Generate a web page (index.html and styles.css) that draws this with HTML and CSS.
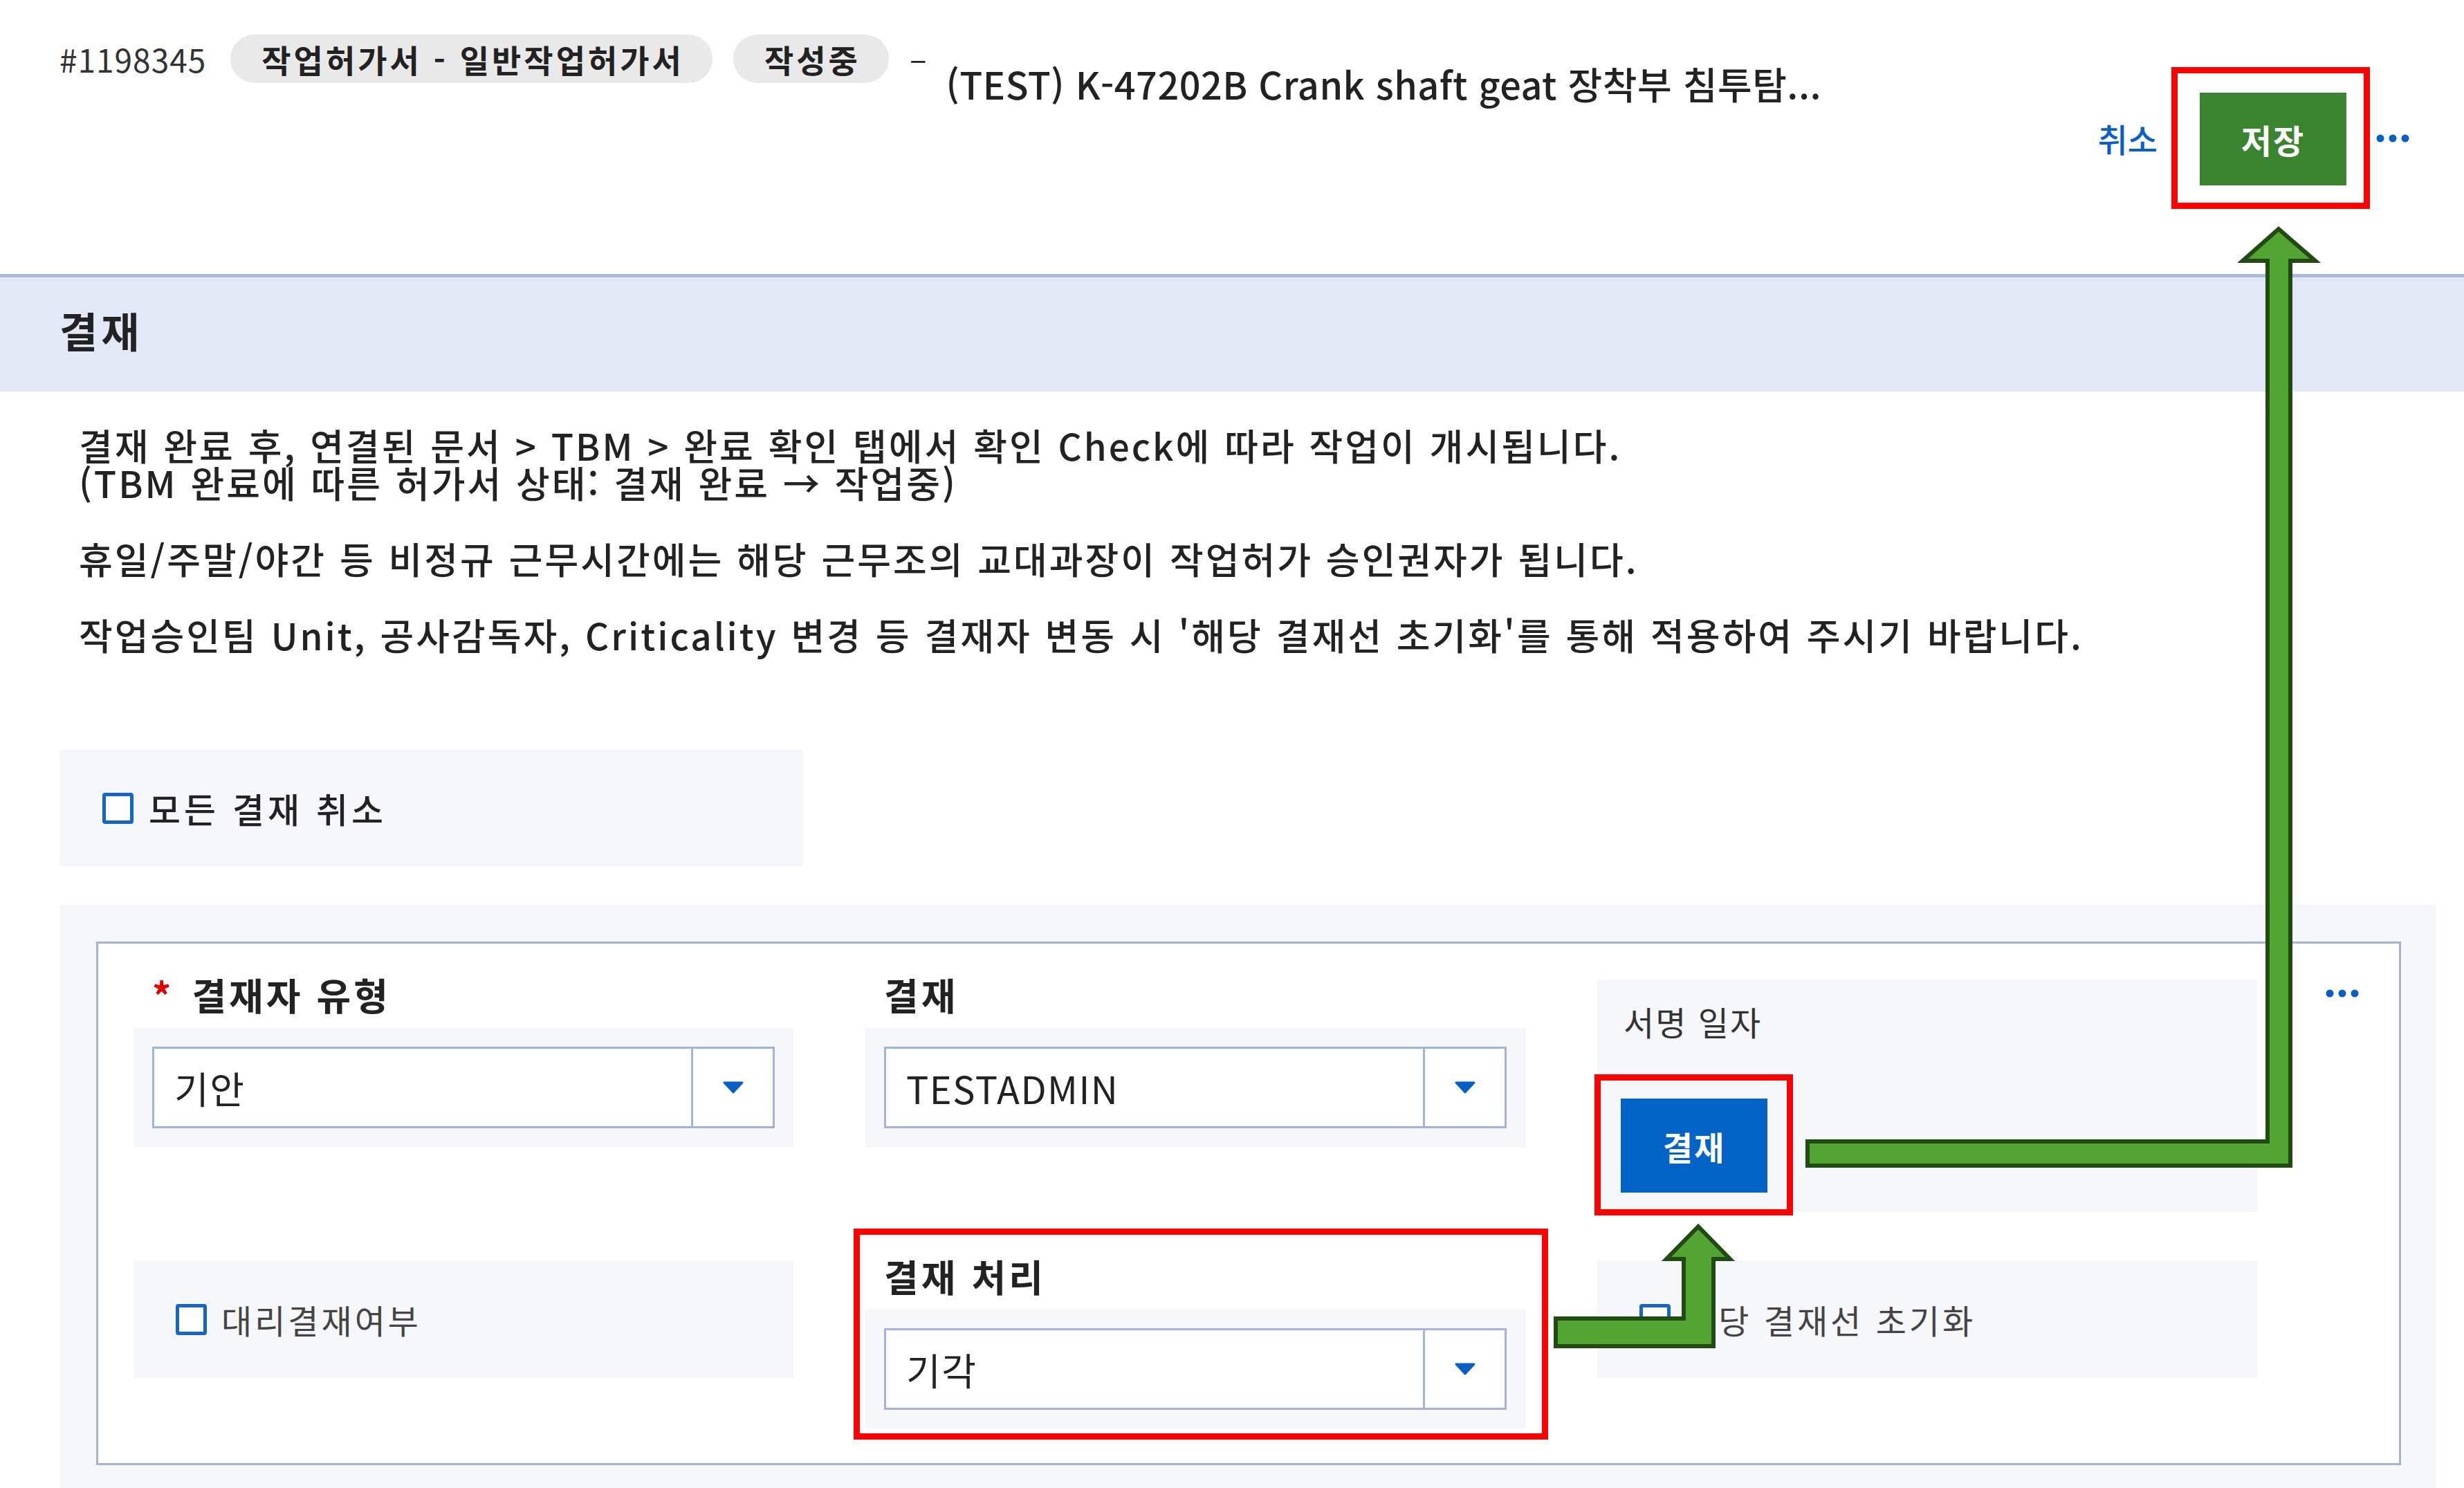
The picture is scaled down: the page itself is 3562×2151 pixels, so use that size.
FILE: index.html
```html
<!DOCTYPE html>
<html lang="ko">

<head>
    <meta charset="UTF-8">
    <meta name="viewport" content="width=device-width, initial-scale=1.0">
    <title>결재</title>
    <link rel="stylesheet" href="styles.css">
</head>

<body>
    <header class="docHeader">
        <div class="docInfo">
            <span class="docId">#1198345</span>
            <span class="chip">작업허가서 - 일반작업허가서</span>
            <span class="chip">작성중</span>
            <span class="dash">–</span>
            <span class="docTitle">(TEST) K-47202B Crank shaft geat 장착부 침투탐...</span>
        </div>
        <div class="docActions">
            <a class="linkBtn" href="#">취소</a>
            <div class="mark markSave">
                <button class="btnSave">저장</button>
            </div>
            <button class="moreBtn" aria-label="더보기">
                <svg width="48" height="12" viewBox="0 0 48 12">
                    <circle cx="6" cy="6" r="5.5" />
                    <circle cx="24" cy="6" r="5.5" />
                    <circle cx="42" cy="6" r="5.5" />
                </svg>
            </button>
        </div>
    </header>

    <section class="panelHead">
        <h2>결재</h2>
    </section>

    <div class="notice">
        <p>결재 완료 후, 연결된 문서 &gt; TBM &gt; 완료 확인 탭에서 확인 Check에 따라 작업이 개시됩니다.<br>(TBM 완료에 따른 허가서 상태: 결재 완료 → 작업중)</p>
        <p>휴일/주말/야간 등 비정규 근무시간에는 해당 근무조의 교대과장이 작업허가 승인권자가 됩니다.</p>
        <p>작업승인팀 Unit, 공사감독자, Criticality 변경 등 결재자 변동 시 '해당 결재선 초기화'를 통해 적용하여 주시기 바랍니다.</p>
    </div>

    <label class="cancelAll">
        <span class="checkbox"></span>
        <span>모든 결재 취소</span>
    </label>

    <section class="approval">
        <div class="card">
            <div class="grid">
                <div class="field">
                    <div class="label"><span class="req">*</span>결재자 유형</div>
                    <div class="fieldBox">
                        <div class="select">
                            <span class="selectValue">기안</span>
                            <span class="selectBtn">
                                <svg width="32" height="18" viewBox="0 0 32 18"><path d="M3 2 H29 L16 16 Z" /></svg>
                            </span>
                        </div>
                    </div>
                </div>

                <div class="field">
                    <div class="label">결재</div>
                    <div class="fieldBox">
                        <div class="select">
                            <span class="selectValue">TESTADMIN</span>
                            <span class="selectBtn">
                                <svg width="32" height="18" viewBox="0 0 32 18"><path d="M3 2 H29 L16 16 Z" /></svg>
                            </span>
                        </div>
                    </div>
                </div>

                <div class="signBox">
                    <div class="signLabel">서명 일자</div>
                    <div class="mark markSign">
                        <button class="btnSign">결재</button>
                    </div>
                </div>

                <label class="optBox">
                    <span class="checkbox"></span>
                    <span>대리결재여부</span>
                </label>

                <div class="mark markField">
                    <div class="field">
                        <div class="label">결재 처리</div>
                        <div class="fieldBox">
                            <div class="select">
                                <span class="selectValue">기각</span>
                                <span class="selectBtn">
                                    <svg width="32" height="18" viewBox="0 0 32 18"><path d="M3 2 H29 L16 16 Z" /></svg>
                                </span>
                            </div>
                        </div>
                    </div>
                </div>

                <label class="optBox">
                    <span class="checkbox"></span>
                    <span>해당 결재선 초기화</span>
                </label>
            </div>
            <button class="moreBtn cardMore" aria-label="더보기">
                <svg width="48" height="12" viewBox="0 0 48 12">
                    <circle cx="6" cy="6" r="5.5" />
                    <circle cx="24" cy="6" r="5.5" />
                    <circle cx="42" cy="6" r="5.5" />
                </svg>
            </button>
        </div>
    </section>

    <!-- annotation arrows drawn over the page -->
    <svg class="annot" width="3562" height="2151" viewBox="0 0 3562 2151">
        <path d="M2613 1650 H3278 V377 H3242 L3294 331 L3347 377 H3311 V1685 H2613 Z" />
        <path d="M2249 1906 H2434 V1820 H2409 L2455 1773 L2501 1820 H2477 V1946 H2249 Z" />
    </svg>
</body>

</html>
```

FILE: styles.css
```css
* {
    margin: 0;
    padding: 0;
    box-sizing: border-box;
    font-family: "Noto Sans CJK KR", "Noto Sans", sans-serif;
}

body {
    position: relative;
    width: 3562px;
    height: 2151px;
    overflow: hidden;
    background-color: #fff;
    color: #222;
}

button {
    cursor: pointer;
    border: none;
    background: none;
}

/* header */

.docHeader {
    display: flex;
    justify-content: space-between;
    align-items: flex-start;
    height: 396px;
    padding: 0 79px 0 86px;
}

.docInfo {
    display: flex;
    align-items: flex-start;
    padding-top: 50px;
}

.docId {
    font-size: 46px;
    line-height: 70px;
    letter-spacing: 1px;
    color: #333;
    margin-right: 35px;
}

.chip {
    height: 70px;
    line-height: 70px;
    padding: 0 41px 0 45px;
    border-radius: 35px;
    background-color: #e9e9e9;
    font-size: 46px;
    font-weight: 700;
    letter-spacing: 4px;
    margin-right: 30px;
}

.dash {
    font-size: 46px;
    line-height: 64px;
}

.docTitle {
    font-size: 54px;
    line-height: 70px;
    font-weight: 500;
    letter-spacing: 0.5px;
    margin: 36px 0 0 28px;
}

.docActions {
    display: flex;
    align-items: center;
    margin-top: 97px;
}

.linkBtn {
    font-size: 47px;
    font-weight: 500;
    color: #0a5fc4;
    text-decoration: none;
    margin-right: 20px;
}

.mark {
    border: 9px solid #ff0000;
}

.markSave {
    padding: 28px 25px 25px 32px;
}

.btnSave {
    display: block;
    width: 212px;
    height: 134px;
    background-color: #3a832f;
    color: #fff;
    font-size: 48px;
    font-weight: 700;
    letter-spacing: 2px;
}

.moreBtn {
    display: flex;
    margin-left: 9px;
    fill: #0a5fc4;
}

/* section title */

.panelHead {
    display: flex;
    align-items: center;
    height: 170px;
    padding: 0 0 14px 86px;
    border-top: 5px solid #a9bbdd;
    background-color: #e2e8f5;
}

.panelHead h2 {
    font-size: 60px;
    font-weight: 700;
    letter-spacing: 5px;
    color: #222;
}

.notice {
    padding: 50px 0 0 114px;
}

.notice p {
    font-size: 53px;
    line-height: 54px;
    font-weight: 500;
    letter-spacing: 3px;
    word-spacing: 1px;
    margin-bottom: 56px;
}

/* checkboxes */

.checkbox {
    flex: none;
    width: 45px;
    height: 45px;
    border: 5px solid #1766c7;
    border-radius: 4px;
    background-color: #fff;
}

.cancelAll {
    display: flex;
    align-items: center;
    gap: 22px;
    width: 1075px;
    height: 168px;
    margin: 140px 0 0 86px;
    padding-left: 62px;
    background-color: #f5f7fb;
    font-size: 50px;
    font-weight: 500;
    letter-spacing: 5px;
}

/* approval line */

.approval {
    width: 3435px;
    height: 900px;
    margin: 56px 0 0 86px;
    padding: 53px 50px 0 53px;
    background-color: #f5f7fb;
}

.card {
    display: flex;
    align-items: flex-start;
    border: 3px solid #a3b4d6;
    background-color: #fff;
    padding: 46px 0 50px 51px;
}

.grid {
    display: grid;
    grid-template-columns: repeat(3, 954px);
    column-gap: 104px;
    row-gap: 65px;
    align-items: start;
}

.cardMore {
    margin: 20px 0 0 99px;
}

.label {
    padding-left: 27px;
    font-size: 54px;
    line-height: 56px;
    font-weight: 700;
    letter-spacing: 4px;
    margin-bottom: 20px;
}

.req {
    color: #e00000;
    margin-right: 26px;
}

.fieldBox {
    padding: 27px;
    background-color: #f5f7fb;
}

.select {
    display: flex;
    height: 118px;
    border: 3px solid #a2b4d9;
    background-color: #fff;
}

.selectValue {
    flex: 1;
    display: flex;
    align-items: center;
    padding-left: 29px;
    font-size: 54px;
    letter-spacing: 1.5px;
}

.selectBtn {
    display: flex;
    align-items: center;
    justify-content: center;
    width: 118px;
    border-left: 3px solid #a2b4d9;
    fill: #0a5fc4;
}

.selectBtn path {
    stroke: #0a5fc4;
    stroke-width: 3;
    stroke-linejoin: round;
}

.signBox {
    height: 336px;
    margin-top: 6px;
    padding: 32px 0 0 38px;
    background-color: #f5f7fb;
}

.signLabel {
    font-size: 48px;
    line-height: 56px;
    letter-spacing: 2px;
    color: #333;
}

.markSign {
    display: inline-block;
    margin: 49px 0 0 -42px;
    padding: 26px 28px 24px 29px;
    background-color: #f5f7fb;
}

.btnSign {
    display: block;
    width: 212px;
    height: 136px;
    background-color: #0063c5;
    color: #fff;
    font-size: 47px;
    font-weight: 700;
    letter-spacing: 2px;
}

.optBox {
    display: flex;
    align-items: center;
    gap: 21px;
    height: 170px;
    margin-top: 5px;
    padding-left: 61px;
    background-color: #f5f7fb;
    font-size: 48px;
    letter-spacing: 4px;
    color: #444;
}

.markField {
    margin: -41px -33px -16px -17px;
    padding: 32px 24px 7px 8px;
}

/* annotation layer */

.annot {
    position: absolute;
    top: 0;
    left: 0;
    pointer-events: none;
}

.annot path {
    fill: #52a532;
    stroke: #214b12;
    stroke-width: 6;
}
```
